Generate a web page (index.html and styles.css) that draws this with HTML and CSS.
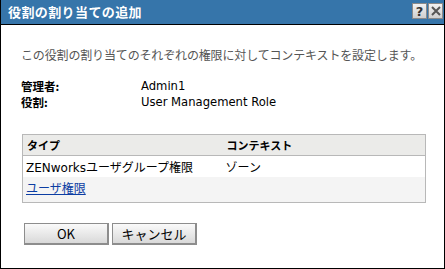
FILE: index.html
```html
<!DOCTYPE html>
<html lang="ja">
<head>
  <meta charset="UTF-8" />
  <title>役割の割り当ての追加</title>
  <link rel="stylesheet" href="styles.css">
</head>
<body>
  <div class="dialog">
    <div class="titlebar">
      <span class="title">役割の割り当ての追加</span>
      <div class="tools">
        <span class="tool">?</span>
        <span class="tool">
          <svg width="12" height="12" viewBox="0 0 12 12"><path d="M2 2 L10 10 M10 2 L2 10" stroke="#555" stroke-width="2"/></svg>
        </span>
      </div>
    </div>

    <div class="content">
      <p class="desc">この役割の割り当てのそれぞれの権限に対してコンテキストを設定します。</p>

      <div class="info">
        <span class="label">管理者:</span><span class="value">Admin1</span>
        <span class="label">役割:</span><span class="value">User Management Role</span>
      </div>

      <table class="rights">
        <tr class="head">
          <th class="col-type">タイプ</th>
          <th>コンテキスト</th>
        </tr>
        <tr>
          <td>ZENworksユーザグループ権限</td>
          <td>ゾーン</td>
        </tr>
        <tr class="alt">
          <td><a href="#">ユーザ権限</a></td>
          <td></td>
        </tr>
      </table>

      <div class="buttons">
        <button>OK</button>
        <button>キャンセル</button>
      </div>
    </div>
  </div>
</body>
</html>
```

FILE: styles.css
```css
* {
  box-sizing: border-box;
  margin: 0;
  padding: 0;
}
body {
  background: #fff;
  font-family: "DejaVu Sans", "Noto Sans CJK JP", sans-serif;
  font-size: 12px;
  color: #000;
}
.dialog {
  width: 445px;
  height: 269px;
  border: 1px solid #000;
  border-top: none;
}
.titlebar {
  height: 25px;
  background: #3675aa;
  border-bottom: 1px solid #000;
  display: flex;
  align-items: center;
  justify-content: space-between;
  padding: 0 1px 2px 7px;
}
.title {
  color: #fff;
  font-family: "Noto Sans CJK JP", sans-serif;
  font-weight: bold;
  font-size: 13px;
  letter-spacing: 0.4px;
}
.tools {
  display: flex;
  gap: 1px;
}
.tool {
  width: 15px;
  height: 16px;
  background: linear-gradient(#f2f2f2, #cfcfcf);
  border: 1px solid #8a8a8a;
  display: flex;
  align-items: center;
  justify-content: center;
  font-weight: bold;
  font-size: 13px;
  color: #333;
}
.content {
  padding: 22px 20px 0 20px;
}
.desc {
  font-family: "Noto Sans CJK JP", sans-serif;
  color: #555;
  line-height: 16px;
  letter-spacing: -0.15px;
}
.info {
  display: grid;
  grid-template-columns: 120px auto;
  grid-auto-rows: 16px;
  line-height: 16px;
  margin-top: 15px;
}
.label {
  font-family: "Noto Sans CJK JP", sans-serif;
  font-weight: bold;
  font-size: 11.5px;
}
.value {
  font-size: 11.6px;
}
.rights {
  margin: 24px 0 0 1px;
  width: 404px;
  border: 1px solid #b8b8b8;
  border-collapse: collapse;
}
.rights th {
  font-family: "Noto Sans CJK JP", sans-serif;
  font-size: 11px;
  text-align: left;
  background: #ebebe9;
  height: 21px;
  padding: 0 4px;
  border-bottom: 1px solid #b8b8b8;
}
.rights .col-type {
  width: 200px;
}
.rights td {
  height: 21px;
  padding: 0 3px;
}
.rights .alt td {
  background: #f4f4f4;
  height: 26px;
  padding-bottom: 3px;
}
.rights a {
  color: #0c3da3;
}
.buttons {
  display: flex;
  gap: 3px;
  margin-top: 20px;
  padding-left: 3px;
}
button {
  width: 85px;
  height: 22px;
  border: 1px solid #8d8d8d;
  border-width: 1px 2px 2px 1px;
  background: linear-gradient(#fafafa, #d9d9d9);
  font-family: "Noto Sans CJK JP", sans-serif;
  font-size: 13px;
  color: #000;
}
```
